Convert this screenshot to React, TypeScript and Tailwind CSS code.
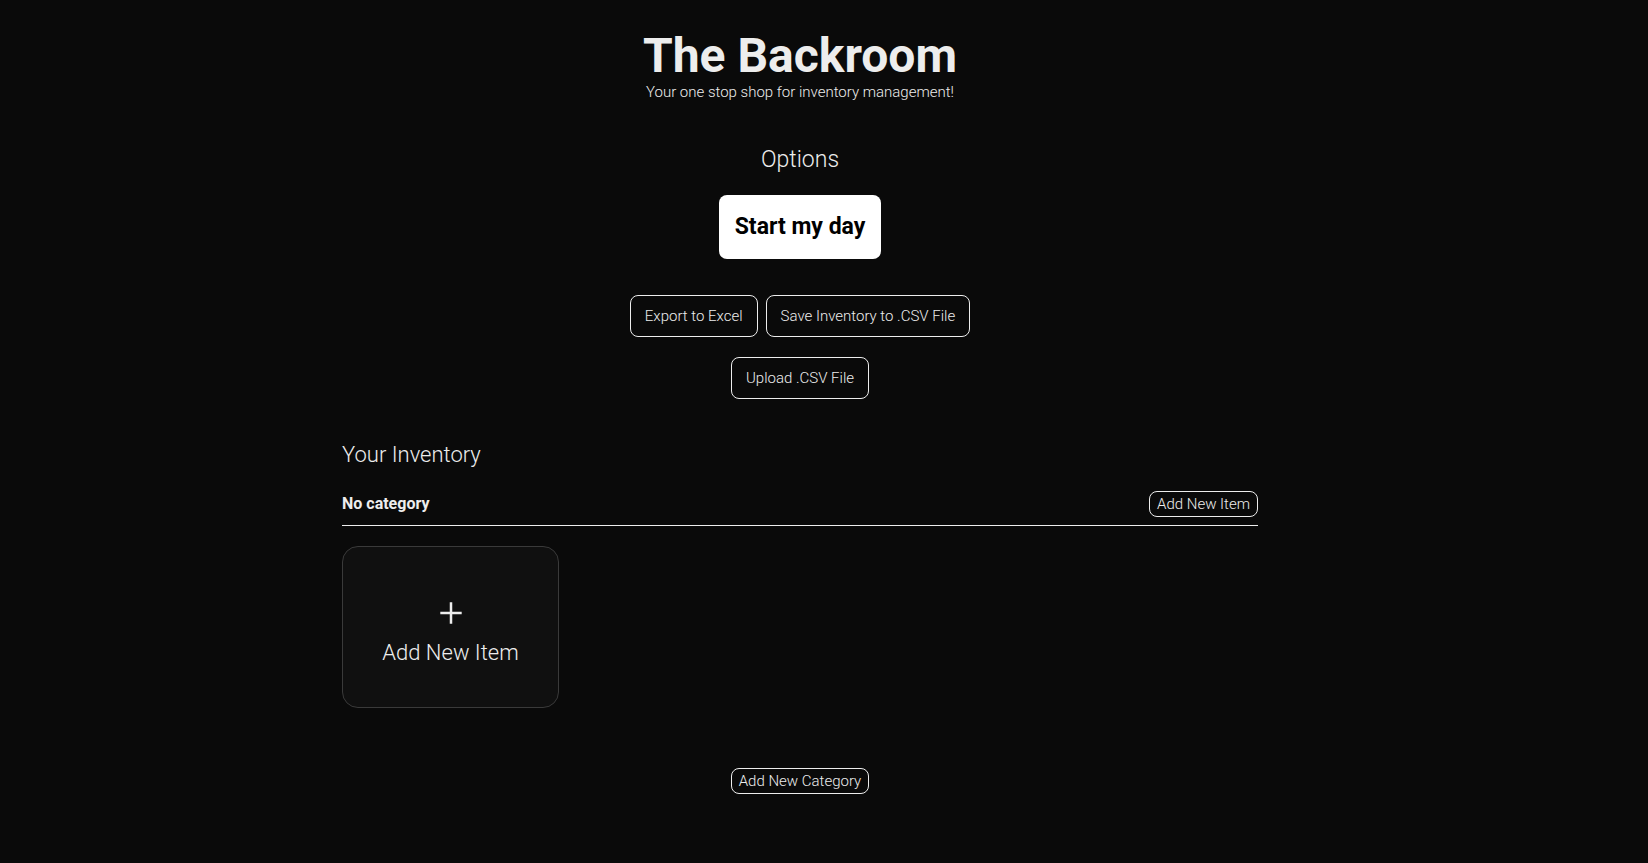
const outlined =
  "cursor-pointer rounded-lg border border-[#ededed] text-[15px] leading-6 hover:bg-white/10";

export default function App() {
  return (
    <div className="min-h-screen bg-[#0a0a0a] pr-12 font-['Roboto','Liberation_Sans',sans-serif] font-light text-[#ededed]">
      <main className="mx-auto flex max-w-[916px] flex-col items-center py-8">
        <header className="flex flex-col items-center text-center">
          <h1 className="text-5xl leading-[48px] font-bold">The Backroom</h1>
          <p className="text-[15px] leading-6">
            Your one stop shop for inventory management!
          </p>
        </header>

        <section className="mt-10 flex flex-col items-center">
          <h2 className="text-[23px] leading-8">Options</h2>
          <button
            type="button"
            className="mt-[19px] cursor-pointer rounded-lg bg-white p-4 text-[23px] leading-8 font-bold text-black"
          >
            Start my day
          </button>
          <div className="mt-9 flex gap-2">
            <button type="button" className={`${outlined} px-[14px] py-2`}>
              Export to Excel
            </button>
            <button type="button" className={`${outlined} px-[14px] py-2`}>
              Save Inventory to .CSV File
            </button>
          </div>
          <button type="button" className={`${outlined} mt-5 px-[14px] py-2`}>
            Upload .CSV File
          </button>
        </section>

        <section className="mt-10 w-full">
          <h2 className="text-[22px] leading-8">Your Inventory</h2>
          <div className="mt-5 flex items-center justify-between border-b border-[#ededed] pb-2">
            <h3 className="text-base leading-6 font-bold">No category</h3>
            <button type="button" className={`${outlined} px-[7px]`}>
              Add New Item
            </button>
          </div>
          <div className="mt-5 grid grid-cols-4 gap-4">
            <button
              type="button"
              className="flex h-[162px] cursor-pointer flex-col items-center rounded-2xl border border-[#3a3a3a] bg-[#101010] pt-[54px] hover:bg-[#181818]"
            >
              <svg
                className="mb-3 size-6"
                viewBox="0 0 24 24"
                fill="none"
                stroke="currentColor"
                strokeWidth="2.5"
                aria-hidden="true"
              >
                <path d="M12 1.3v21.4M1.3 12h21.4" />
              </svg>
              <span className="text-[22px] leading-8">Add New Item</span>
            </button>
          </div>
        </section>

        <button type="button" className={`${outlined} mt-15 px-[7px]`}>
          Add New Category
        </button>
      </main>
    </div>
  );
}
